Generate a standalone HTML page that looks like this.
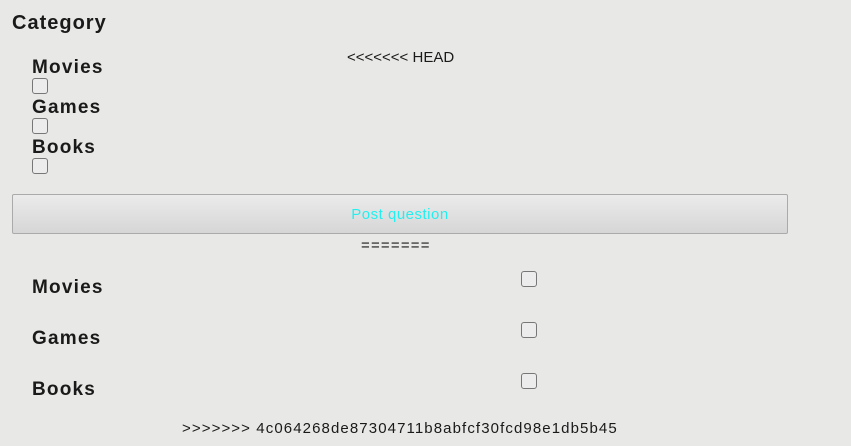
<!DOCTYPE html>
<html><head><style>
body{margin:0;width:851px;height:446px;background:#e8e8e6;font-family:"Liberation Sans",sans-serif;color:#1a1a1a;position:relative;overflow:hidden}
.a{position:absolute;white-space:nowrap}
.h{font-weight:bold;font-size:19px;letter-spacing:1.2px}
.cb{position:absolute;width:16px;height:16px;border:1px solid #777;border-radius:3px;background:#ececec;box-sizing:border-box}
.s{font-size:15px}
</style></head><body>
<div class="a h" style="left:12px;top:12px;font-size:20px;letter-spacing:1px">Category</div>
<div class="a s" style="left:347px;top:49px;letter-spacing:0px">&lt;&lt;&lt;&lt;&lt;&lt;&lt; HEAD</div>
<div class="a h" style="left:32px;top:57px">Movies</div>
<div class="cb" style="left:32px;top:78px"></div>
<div class="a h" style="left:32px;top:97px">Games</div>
<div class="cb" style="left:32px;top:118px"></div>
<div class="a h" style="left:32px;top:137px">Books</div>
<div class="cb" style="left:32px;top:158px"></div>
<div class="a" style="left:12px;top:194px;width:776px;height:40px;box-sizing:border-box;border:1px solid #aaa;border-radius:2px;background:linear-gradient(#ebebeb,#d6d6d6);text-align:center;line-height:40px;color:#22f0f0;font-size:15px;letter-spacing:0.5px">Post question</div>
<div class="a s" style="left:361px;top:237px;letter-spacing:1.2px">=======</div>
<div class="a h" style="left:32px;top:277px">Movies</div>
<div class="cb" style="left:521px;top:271px"></div>
<div class="a h" style="left:32px;top:328px">Games</div>
<div class="cb" style="left:521px;top:322px"></div>
<div class="a h" style="left:32px;top:379px">Books</div>
<div class="cb" style="left:521px;top:373px"></div>
<div class="a s" style="left:182px;top:420px;letter-spacing:1.1px">&gt;&gt;&gt;&gt;&gt;&gt;&gt; 4c064268de87304711b8abfcf30fcd98e1db5b45</div>
</body></html>
